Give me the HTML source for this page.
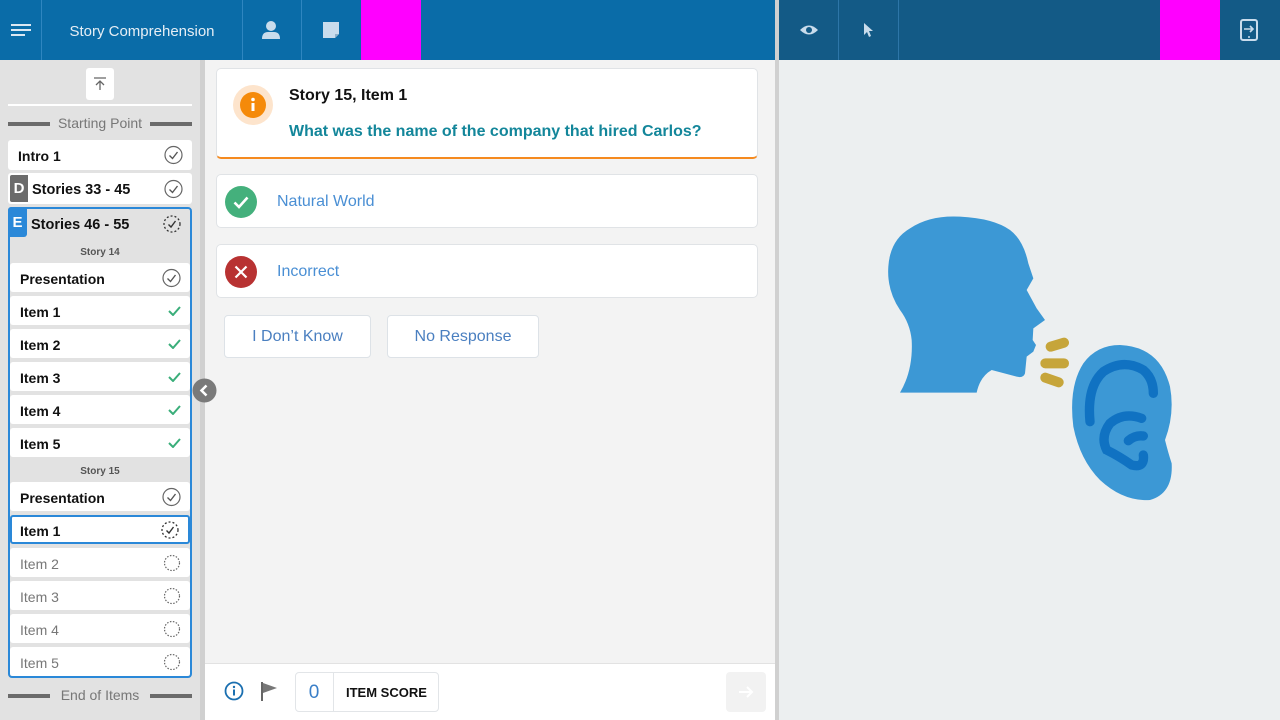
<!DOCTYPE html>
<html><head><meta charset="utf-8"><style>
*{box-sizing:border-box;margin:0;padding:0}
body{width:1280px;height:720px;overflow:hidden;font-family:"Liberation Sans",Arial,sans-serif;position:relative;background:#f3f3f3}
.abs{position:absolute}
.hdrL{left:0;top:0;width:775px;height:60px;background:#0a6ca8}
.hdrR{left:779px;top:0;width:501px;height:60px;background:#135a86}
.sep{position:absolute;top:0;width:1px;height:60px;background:#2f86c0}
.side{left:0;top:60px;width:200px;height:660px;background:#e2e2e2}
.gut1{left:200px;top:60px;width:5px;height:660px;background:#d0d0d0}
.gut2{left:775px;top:0;width:4px;height:720px;background:#d0d0d0}
.right{left:779px;top:60px;width:501px;height:660px;background:#eceff0}
.row{position:absolute;background:#fff;border-radius:3px;font-size:14px;font-weight:bold;color:#111;padding-left:10px;padding-top:2px;display:flex;align-items:center}
.row.g{font-weight:normal;color:#777}
.ic{position:absolute;right:9px;top:50%;transform:translateY(-50%)}
.lab{position:absolute;left:0;width:200px;text-align:center;font-size:14px;color:#777}
.lab:before,.lab:after{content:"";position:absolute;top:7px;width:42px;height:4px;background:#6b6b6b}
.lab:before{left:8px}.lab:after{right:8px}
.st{position:absolute;left:10px;width:180px;text-align:center;font-size:10px;font-weight:bold;color:#555}
.card{position:absolute;background:#fff;border:1px solid #e0e3e6;border-radius:5px}
.btn{position:absolute;background:#fff;border:1px solid #dde2e7;border-radius:4px;color:#4a7fc0;font-size:16px;display:flex;align-items:center;justify-content:center;padding-top:1px}
</style></head><body>
<div class="abs hdrL"></div>
<div class="sep" style="left:41px"></div><div class="sep" style="left:242px"></div><div class="sep" style="left:301px"></div>
<div class="abs" style="left:361px;top:0;width:60px;height:60px;background:#ff00ff"></div>
<svg class="abs" style="left:11px;top:24px" width="21" height="13"><rect y="0" width="20" height="2" fill="#dbe8f3"/><rect y="5" width="20" height="2" fill="#dbe8f3"/><rect y="10" width="14" height="2" fill="#dbe8f3"/></svg>
<div class="abs" style="left:42px;top:23px;width:200px;text-align:center;color:#e6eef5;font-size:15px">Story Comprehension</div>
<svg class="abs" style="left:261px;top:20px" width="20" height="19"><circle cx="10" cy="6" r="5" fill="#c9dcec"/><path d="M1 19 Q1 12 7 12 H13 Q19 12 19 19Z" fill="#c9dcec"/></svg>
<svg class="abs" style="left:323px;top:22px" width="17" height="17"><path d="M0 0H16V12L12 16H0Z" fill="#c9dcec"/><path d="M12 16V12H16" fill="#8fb0c9"/></svg>
<div class="abs gut2"></div>
<div class="abs hdrR"></div>
<div class="sep" style="left:838px;background:#2d76a8"></div><div class="sep" style="left:898px;background:#2d76a8"></div>
<div class="abs" style="left:1160px;top:0;width:60px;height:60px;background:#ff00ff"></div>
<svg class="abs" style="left:800px;top:24px" width="18" height="12"><path d="M0 6Q9 -3 18 6Q9 15 0 6Z" fill="#c9dcec"/><circle cx="9" cy="6" r="3" fill="#135a86"/></svg>
<svg class="abs" style="left:864px;top:23px" width="10" height="14"><path d="M0 0V12L3 9L5 14L7 13L5 8H9Z" fill="#c9dcec"/></svg>
<svg class="abs" style="left:1240px;top:19px" width="18" height="22"><rect x="1" y="1" width="16" height="20" rx="2" fill="none" stroke="#c9dcec" stroke-width="2"/><path d="M4 10H13M10 7L13 10L10 13" stroke="#c9dcec" stroke-width="1.6" fill="none"/><circle cx="9" cy="18" r="1" fill="#c9dcec"/></svg>

<div class="abs side"></div>
<div class="abs gut1"></div>
<div class="abs" style="left:86px;top:68px;width:28px;height:32px;background:#fff;border-radius:3px"></div>
<svg class="abs" style="left:93px;top:77px" width="14" height="14"><path d="M1 1H13M7 13V4M3 8L7 4L11 8" stroke="#666" stroke-width="1.3" fill="none"/></svg>
<div class="abs" style="left:8px;top:104px;width:184px;height:2px;background:#fff"></div>
<div class="lab" style="top:115px">Starting Point</div>
<div class="row" style="left:8px;top:140px;width:184px;height:30px">Intro 1<svg class="ic" width="19" height="19"><circle cx="9.5" cy="9.5" r="8.5" fill="none" stroke="#666" stroke-width="1.2"/><path d="M5.5 10L8.5 13L13.5 6.5" stroke="#555" stroke-width="1.4" fill="none"/></svg></div>
<div class="row" style="left:8px;top:173px;width:184px;height:31px;padding-left:24px;font-size:14.5px">Stories 33 - 45<div class="abs" style="left:2px;top:2px;width:18px;height:27px;background:#6b6b6b;color:#fff;font-size:15px;text-align:center;line-height:27px;border-radius:2px 0 0 2px">D</div><svg class="ic" width="19" height="19"><circle cx="9.5" cy="9.5" r="8.5" fill="none" stroke="#666" stroke-width="1.2"/><path d="M5.5 10L8.5 13L13.5 6.5" stroke="#555" stroke-width="1.4" fill="none"/></svg></div>
<div class="abs" style="left:8px;top:207px;width:184px;height:471px;border:2px solid #2a88d8;border-radius:4px"></div>
<div class="abs" style="left:8px;top:207px;width:19px;height:30px;background:#2a88d8;color:#fff;font-weight:bold;font-size:15px;text-align:center;line-height:32px;border-radius:3px 0 3px 0">E</div>
<div class="abs" style="left:31px;top:217px;font-weight:bold;font-size:14.5px;color:#111">Stories 46 - 55</div>
<svg class="abs" style="left:163px;top:215px" width="18" height="18"><circle cx="9" cy="9" r="8" fill="none" stroke="#333" stroke-width="1.3" stroke-dasharray="2 2"/><path d="M5.5 9.5L8 12L12.5 6" stroke="#333" stroke-width="1.4" fill="none"/></svg>
<div class="st" style="top:247px">Story 14</div>
<div class="row" style="left:10px;top:263px;width:180px;height:29px">Presentation<svg class="ic" width="19" height="19"><circle cx="9.5" cy="9.5" r="8.5" fill="none" stroke="#666" stroke-width="1.2"/><path d="M5.5 10L8.5 13L13.5 6.5" stroke="#555" stroke-width="1.4" fill="none"/></svg></div>
<div class="row" style="left:10px;top:296px;width:180px;height:29px">Item 1<svg class="ic" width="13" height="10"><path d="M1 5L5 9L12 1" stroke="#3aae7a" stroke-width="2" fill="none"/></svg></div>
<div class="row" style="left:10px;top:329px;width:180px;height:29px">Item 2<svg class="ic" width="13" height="10"><path d="M1 5L5 9L12 1" stroke="#3aae7a" stroke-width="2" fill="none"/></svg></div>
<div class="row" style="left:10px;top:362px;width:180px;height:29px">Item 3<svg class="ic" width="13" height="10"><path d="M1 5L5 9L12 1" stroke="#3aae7a" stroke-width="2" fill="none"/></svg></div>
<div class="row" style="left:10px;top:395px;width:180px;height:29px">Item 4<svg class="ic" width="13" height="10"><path d="M1 5L5 9L12 1" stroke="#3aae7a" stroke-width="2" fill="none"/></svg></div>
<div class="row" style="left:10px;top:428px;width:180px;height:29px">Item 5<svg class="ic" width="13" height="10"><path d="M1 5L5 9L12 1" stroke="#3aae7a" stroke-width="2" fill="none"/></svg></div>
<div class="st" style="top:466px">Story 15</div>
<div class="row" style="left:10px;top:482px;width:180px;height:29px">Presentation<svg class="ic" width="19" height="19"><circle cx="9.5" cy="9.5" r="8.5" fill="none" stroke="#666" stroke-width="1.2"/><path d="M5.5 10L8.5 13L13.5 6.5" stroke="#555" stroke-width="1.4" fill="none"/></svg></div>
<div class="row" style="left:10px;top:515px;width:180px;height:29px;border:2px solid #2a88d8;padding-left:8px">Item 1<svg class="ic" width="18" height="18"><circle cx="9" cy="9" r="8" fill="none" stroke="#333" stroke-width="1.3" stroke-dasharray="2 2"/><path d="M5.5 9.5L8 12L12.5 6" stroke="#333" stroke-width="1.4" fill="none"/></svg></div>
<div class="row g" style="left:10px;top:548px;width:180px;height:29px">Item 2<svg class="ic" width="18" height="18"><circle cx="9" cy="9" r="7.5" fill="none" stroke="#666" stroke-width="1.2" stroke-dasharray="1.5 1.5"/></svg></div>
<div class="row g" style="left:10px;top:581px;width:180px;height:29px">Item 3<svg class="ic" width="18" height="18"><circle cx="9" cy="9" r="7.5" fill="none" stroke="#666" stroke-width="1.2" stroke-dasharray="1.5 1.5"/></svg></div>
<div class="row g" style="left:10px;top:614px;width:180px;height:29px">Item 4<svg class="ic" width="18" height="18"><circle cx="9" cy="9" r="7.5" fill="none" stroke="#666" stroke-width="1.2" stroke-dasharray="1.5 1.5"/></svg></div>
<div class="row g" style="left:10px;top:647px;width:180px;height:29px">Item 5<svg class="ic" width="18" height="18"><circle cx="9" cy="9" r="7.5" fill="none" stroke="#666" stroke-width="1.2" stroke-dasharray="1.5 1.5"/></svg></div>
<div class="lab" style="top:687px">End of Items</div>
<svg class="abs" style="left:192px;top:378px" width="25" height="25"><circle cx="12.5" cy="12.5" r="12" fill="#7a7a7a"/><path d="M14.5 7.5L9.5 12.5L14.5 17.5" stroke="#fff" stroke-width="2.5" fill="none"/></svg>

<div class="card" style="left:216px;top:68px;width:542px;height:91px;border-bottom:2px solid #f58a1f"></div>
<svg class="abs" style="left:233px;top:85px" width="40" height="40"><circle cx="20" cy="20" r="20" fill="#fde4cc"/><circle cx="20" cy="20" r="13" fill="#f58a0a"/><rect x="18.5" y="18" width="3" height="8" fill="#fff"/><circle cx="20" cy="14.5" r="1.8" fill="#fff"/></svg>
<div class="abs" style="left:289px;top:87px;font-size:16px;font-weight:bold;color:#111">Story 15, Item 1</div>
<div class="abs" style="left:289px;top:123px;font-size:16px;font-weight:bold;color:#13869a">What was the name of the company that hired Carlos?</div>
<div class="card" style="left:216px;top:174px;width:542px;height:54px"></div>
<svg class="abs" style="left:225px;top:186px" width="32" height="32"><circle cx="16" cy="16" r="16" fill="#44b07c"/><path d="M9.5 16.5L14 21L22.5 11.5" stroke="#fff" stroke-width="2.6" fill="none"/></svg>
<div class="abs" style="left:277px;top:193px;font-size:16px;color:#4a8fd4">Natural World</div>
<div class="card" style="left:216px;top:244px;width:542px;height:54px"></div>
<svg class="abs" style="left:225px;top:256px" width="32" height="32"><circle cx="16" cy="16" r="16" fill="#b83232"/><path d="M10.5 10.5L21.5 21.5M21.5 10.5L10.5 21.5" stroke="#fff" stroke-width="2.2"/></svg>
<div class="abs" style="left:277px;top:263px;font-size:16px;color:#4a8fd4">Incorrect</div>
<div class="btn" style="left:224px;top:315px;width:147px;height:43px">I Don’t Know</div>
<div class="btn" style="left:387px;top:315px;width:152px;height:43px">No Response</div>

<div class="abs" style="left:205px;top:663px;width:570px;height:57px;background:#fff;border-top:1px solid #e2e2e2"></div>
<svg class="abs" style="left:224px;top:681px" width="20" height="20"><circle cx="10" cy="10" r="8.5" fill="none" stroke="#1a6fb0" stroke-width="1.8"/><rect x="9" y="8.5" width="2" height="6" fill="#1a6fb0"/><circle cx="10" cy="6" r="1.2" fill="#1a6fb0"/></svg>
<svg class="abs" style="left:261px;top:682px" width="18" height="19"><path d="M1 0V19" stroke="#666" stroke-width="2"/><path d="M2 1L16 6L2 11Z" fill="#777"/></svg>
<div class="abs" style="left:295px;top:672px;width:144px;height:40px;border:1px solid #e2e5e8;border-radius:4px;background:#fff"></div>
<div class="abs" style="left:333px;top:672px;width:1px;height:40px;background:#e2e5e8"></div>
<div class="abs" style="left:295px;top:682px;width:38px;text-align:center;font-size:19px;color:#3a7fc8">0</div>
<div class="abs" style="left:346px;top:685px;font-size:13px;font-weight:bold;color:#111">ITEM SCORE</div>
<div class="abs" style="left:726px;top:672px;width:40px;height:40px;background:#f2f2f2;border-radius:4px"></div>
<svg class="abs" style="left:738px;top:685px" width="16" height="14"><path d="M1 7H14M9 2L14 7L9 12" stroke="#fff" stroke-width="2" fill="none"/></svg>

<div class="abs right"></div>
<svg class="abs" style="left:860px;top:200px" width="340" height="320" viewBox="0 0 1020 960">
<path d="M120 578 Q160 510 155 420 Q150 370 120 330 Q80 270 85 200 Q90 120 150 85 Q210 45 300 50 Q400 55 450 90 Q490 120 505 190 L520 235 L500 270 L530 325 L555 360 L520 385 L518 420 L528 435 L520 455 L500 470 L495 520 Q490 535 470 530 L395 510 Q360 530 350 578 Z" fill="#3c98d5"/>
<path d="M572 440L612 428M556 490H612M556 533L596 547" stroke="#c6a53a" stroke-width="30" stroke-linecap="round"/>
<path d="M780 435 Q900 440 930 560 Q945 640 915 720 Q925 760 935 790 Q940 880 870 900 Q790 905 720 840 Q660 780 640 680 Q625 560 670 490 Q710 435 780 435Z" fill="#3c98d5"/>
<path d="M690 665 Q680 560 730 515 Q790 475 850 510 Q880 535 880 580" stroke="#1072c2" stroke-width="28" fill="none" stroke-linecap="round"/>
<path d="M845 655 Q790 635 750 670 Q720 710 740 750 Q780 770 815 795 Q855 805 850 765" stroke="#1072c2" stroke-width="28" fill="none" stroke-linecap="round"/>
<path d="M805 722 Q825 705 850 708" stroke="#1072c2" stroke-width="28" fill="none" stroke-linecap="round"/>
</svg>
</body></html>
